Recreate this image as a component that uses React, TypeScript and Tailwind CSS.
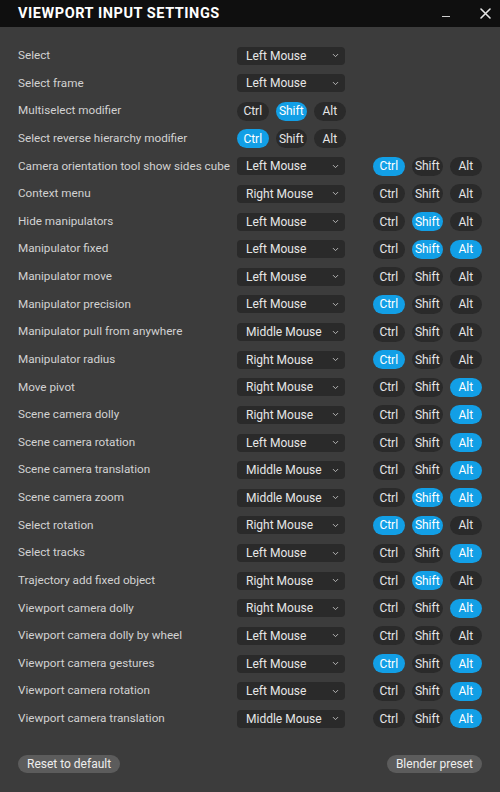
import { ChevronDown } from 'lucide-react';

type Row = {
  label: string;
  mouse?: string;
  mods?: string[];
};

const ROWS: Row[] = [
  { label: 'Select', mouse: 'Left Mouse' },
  { label: 'Select frame', mouse: 'Left Mouse' },
  { label: 'Multiselect modifier', mods: ['Shift'] },
  { label: 'Select reverse hierarchy modifier', mods: ['Ctrl'] },
  { label: 'Camera orientation tool show sides cube', mouse: 'Left Mouse', mods: ['Ctrl'] },
  { label: 'Context menu', mouse: 'Right Mouse', mods: [] },
  { label: 'Hide manipulators', mouse: 'Left Mouse', mods: ['Shift'] },
  { label: 'Manipulator fixed', mouse: 'Left Mouse', mods: ['Shift', 'Alt'] },
  { label: 'Manipulator move', mouse: 'Left Mouse', mods: [] },
  { label: 'Manipulator precision', mouse: 'Left Mouse', mods: ['Ctrl'] },
  { label: 'Manipulator pull from anywhere', mouse: 'Middle Mouse', mods: [] },
  { label: 'Manipulator radius', mouse: 'Right Mouse', mods: ['Ctrl'] },
  { label: 'Move pivot', mouse: 'Right Mouse', mods: ['Alt'] },
  { label: 'Scene camera dolly', mouse: 'Right Mouse', mods: ['Alt'] },
  { label: 'Scene camera rotation', mouse: 'Left Mouse', mods: ['Alt'] },
  { label: 'Scene camera translation', mouse: 'Middle Mouse', mods: ['Alt'] },
  { label: 'Scene camera zoom', mouse: 'Middle Mouse', mods: ['Shift', 'Alt'] },
  { label: 'Select rotation', mouse: 'Right Mouse', mods: ['Ctrl', 'Shift'] },
  { label: 'Select tracks', mouse: 'Left Mouse', mods: ['Alt'] },
  { label: 'Trajectory add fixed object', mouse: 'Right Mouse', mods: ['Shift'] },
  { label: 'Viewport camera dolly', mouse: 'Right Mouse', mods: ['Alt'] },
  { label: 'Viewport camera dolly by wheel', mouse: 'Left Mouse', mods: [] },
  { label: 'Viewport camera gestures', mouse: 'Left Mouse', mods: ['Ctrl', 'Alt'] },
  { label: 'Viewport camera rotation', mouse: 'Left Mouse', mods: ['Alt'] },
  { label: 'Viewport camera translation', mouse: 'Middle Mouse', mods: ['Alt'] },
];

function MouseSelect({ value }: { value: string }) {
  return (
    <div className="w-[108px] h-[18px] rounded-[4px] bg-[#2a2a2a] flex items-center justify-between pl-[9px] pr-[5px] text-[12px] text-[#e6e6e6]">
      <span>{value}</span>
      <ChevronDown size={9} strokeWidth={2.5} className="text-[#bdbdbd]" />
    </div>
  );
}

function Modifiers({ on }: { on: string[] }) {
  return (
    <div className="flex gap-[7px]">
      {['Ctrl', 'Shift', 'Alt'].map((m) => {
        const active = on.includes(m);
        return (
          <button
            key={m}
            className={
              active
                ? 'w-[31.5px] h-[19px] rounded-full bg-[#129fe6] text-white text-[12px] flex items-center justify-center'
                : 'w-[31.5px] h-[19px] rounded-full bg-[#2a2a2a] text-[#e6e6e6] text-[12px] flex items-center justify-center'
            }
          >
            {m}
          </button>
        );
      })}
    </div>
  );
}

export default function App() {
  return (
    <div className="w-[500px] h-[792px] flex flex-col bg-[#3c3c3c] select-none" style={{ fontFamily: 'Roboto, "Noto Sans", sans-serif' }}>
      <div className="h-[27px] bg-[#0f0f0f] flex items-center justify-between pl-[18px] pr-[9px] shrink-0">
        <span className="text-[14.5px] font-bold tracking-[0.55px] text-white">VIEWPORT INPUT SETTINGS</span>
        <div className="flex items-center gap-[30px] text-[#e0e0e0]">
          <div className="w-[8px] h-[1.5px] bg-[#cfcfcf] mt-[6px]" />
          <svg width="11" height="11" viewBox="0 0 11 11" className="stroke-[#e6e6e6]">
            <path d="M1 1 L10 10 M10 1 L1 10" strokeWidth="1.6" strokeLinecap="round" />
          </svg>
        </div>
      </div>

      <div className="flex flex-col px-[18px] pt-[15px]">
        {ROWS.map((r) => (
          <div key={r.label} className="h-[27.625px] flex items-center">
            <div className="w-[219px] text-[11.7px] text-[#d2d2d2] whitespace-nowrap">{r.label}</div>
            {r.mouse ? (
              <div className="flex items-center gap-[28px]">
                <MouseSelect value={r.mouse} />
                {r.mods && <Modifiers on={r.mods} />}
              </div>
            ) : (
              r.mods && <Modifiers on={r.mods} />
            )}
          </div>
        ))}
      </div>

      <div className="mt-auto flex justify-between px-[18px] pb-[19px]">
        <button className="h-[18px] px-[9px] rounded-full bg-[#5c5c5c] text-[12px] text-[#eeeeee]">Reset to default</button>
        <button className="h-[18px] px-[9px] rounded-full bg-[#5c5c5c] text-[12px] text-[#eeeeee]">Blender preset</button>
      </div>
    </div>
  );
}
